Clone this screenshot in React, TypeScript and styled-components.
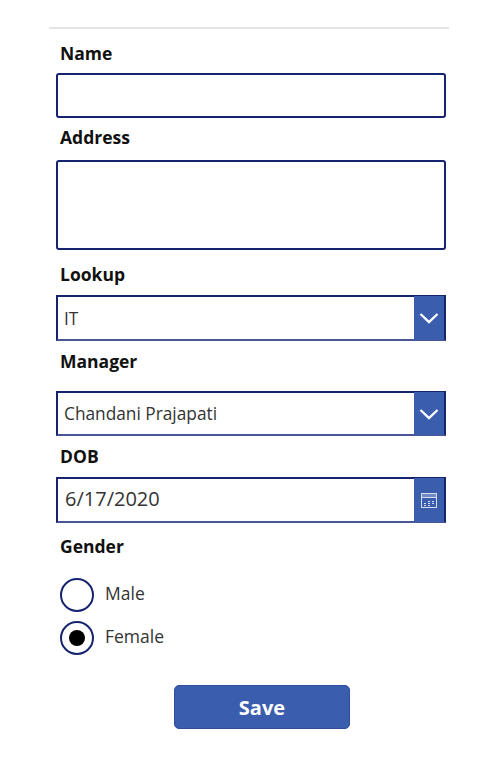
import React from 'react';
import styled, { createGlobalStyle } from 'styled-components';

const GlobalStyle = createGlobalStyle`
  html, body { margin: 0; padding: 0; background: #fff; }
  body { font-family: "Open Sans", "Noto Sans", "Liberation Sans", sans-serif; }
`;

const navy = '#16236f';
const blue = '#3a5dae';

const Page = styled.div`
  width: 497px;
  height: 768px;
  padding: 27px 0 0 49px;
  box-sizing: border-box;
  overflow: hidden;
`;

const Rule = styled.div`
  width: 400px;
  height: 2px;
  background: #e3e3e3;
`;

const Form = styled.form`
  display: flex;
  flex-direction: column;
  width: 390px;
  margin-left: 7px;
`;

const Label = styled.label<{ $top: number; $gap: number }>`
  display: block;
  height: 24px;
  line-height: 23px;
  margin: ${(p) => p.$top}px 0 ${(p) => p.$gap}px 4px;
  font-size: 17.5px;
  font-weight: 700;
  color: #111;
`;

const TextInput = styled.input`
  display: block;
  width: 100%;
  height: 45px;
  box-sizing: border-box;
  border: 2px solid ${navy};
  border-radius: 3px;
  background: #fff;
  outline: none;
`;

const TextArea = styled.textarea`
  display: block;
  width: 100%;
  height: 90px;
  box-sizing: border-box;
  border: 2px solid ${navy};
  border-radius: 3px;
  background: #fff;
  outline: none;
  resize: none;
`;

const Combo = styled.div<{ $height: number }>`
  display: flex;
  align-items: stretch;
  height: ${(p) => p.$height}px;
  box-sizing: border-box;
  border: 2px solid ${navy};
  border-bottom-color: #4a5796;
`;

const ComboText = styled.div<{ $size: number }>`
  flex: 1;
  display: flex;
  align-items: center;
  padding-bottom: ${(p) => (p.$size > 18 ? 4 : 0)}px;
  box-sizing: border-box;
  padding-left: ${(p) => (p.$size > 18 ? 7 : 6)}px;
  font-size: ${(p) => p.$size}px;
  color: #333;
`;

const ComboButton = styled.div`
  width: 30px;
  margin: -1px 0;
  display: flex;
  align-items: center;
  justify-content: center;
  background: ${blue};
`;

const RadioGroup = styled.div`
  display: flex;
  flex-direction: column;
  gap: 9px;
  margin-left: 4px;
`;

const RadioRow = styled.div`
  display: flex;
  align-items: center;
  gap: 11px;
  height: 34px;
`;

const RadioCircle = styled.span<{ $checked?: boolean }>`
  width: 34px;
  height: 34px;
  box-sizing: border-box;
  border: 2px solid ${navy};
  border-radius: 50%;
  display: flex;
  align-items: center;
  justify-content: center;
  &::after {
    content: '';
    display: ${(p) => (p.$checked ? 'block' : 'none')};
    width: 16px;
    height: 16px;
    border-radius: 50%;
    background: #000;
  }
`;

const RadioText = styled.span`
  font-size: 17.5px;
  color: #333;
  padding-bottom: 4px;
`;

const SaveButton = styled.button`
  display: block;
  width: 176px;
  height: 44px;
  margin: 30px 0 0 118px;
  padding: 0;
  border: 1px solid #2f4f9c;
  border-radius: 5px;
  background: ${blue};
  color: #fff;
  font-family: inherit;
  font-size: 20px;
  font-weight: 700;
`;

const Chevron = () => (
  <svg width="20" height="12" viewBox="0 0 20 12" fill="none">
    <path d="M1.5 2l8.5 8 8.5-8" stroke="#fff" strokeWidth="2.4" />
  </svg>
);

const CalendarIcon = () => (
  <svg width="16" height="15" viewBox="0 0 16 15" fill="none" stroke="#d5def0" strokeWidth="1">
    <rect x="0.5" y="0.5" width="15" height="14" />
    <rect x="0.5" y="0.5" width="15" height="4" fill="#d5def0" fillOpacity="0.35" />
    <path d="M3 10.5h2M3 12.5h2M7 8.5h2M7 10.5h2M7 12.5h2M11 8.5h2M11 10.5h2" strokeWidth="1.2" />
  </svg>
);

export default function App() {
  return (
    <Page>
      <GlobalStyle />
      <Rule />
      <Form>
        <Label $top={13} $gap={7}>Name</Label>
        <TextInput />
        <Label $top={8} $gap={10}>Address</Label>
        <TextArea />
        <Label $top={13} $gap={8}>Lookup</Label>
        <Combo $height={46}>
          <ComboText $size={17.3}>IT</ComboText>
          <ComboButton><Chevron /></ComboButton>
        </Combo>
        <Label $top={9} $gap={17}>Manager</Label>
        <Combo $height={45}>
          <ComboText $size={17.3}>Chandani Prajapati</ComboText>
          <ComboButton><Chevron /></ComboButton>
        </Combo>
        <Label $top={9} $gap={8}>DOB</Label>
        <Combo $height={46}>
          <ComboText $size={20}>6/17/2020</ComboText>
          <ComboButton><CalendarIcon /></ComboButton>
        </Combo>
        <Label $top={12} $gap={19}>Gender</Label>
        <RadioGroup>
          <RadioRow>
            <RadioCircle />
            <RadioText>Male</RadioText>
          </RadioRow>
          <RadioRow>
            <RadioCircle $checked />
            <RadioText>Female</RadioText>
          </RadioRow>
        </RadioGroup>
        <SaveButton type="button">Save</SaveButton>
      </Form>
    </Page>
  );
}
